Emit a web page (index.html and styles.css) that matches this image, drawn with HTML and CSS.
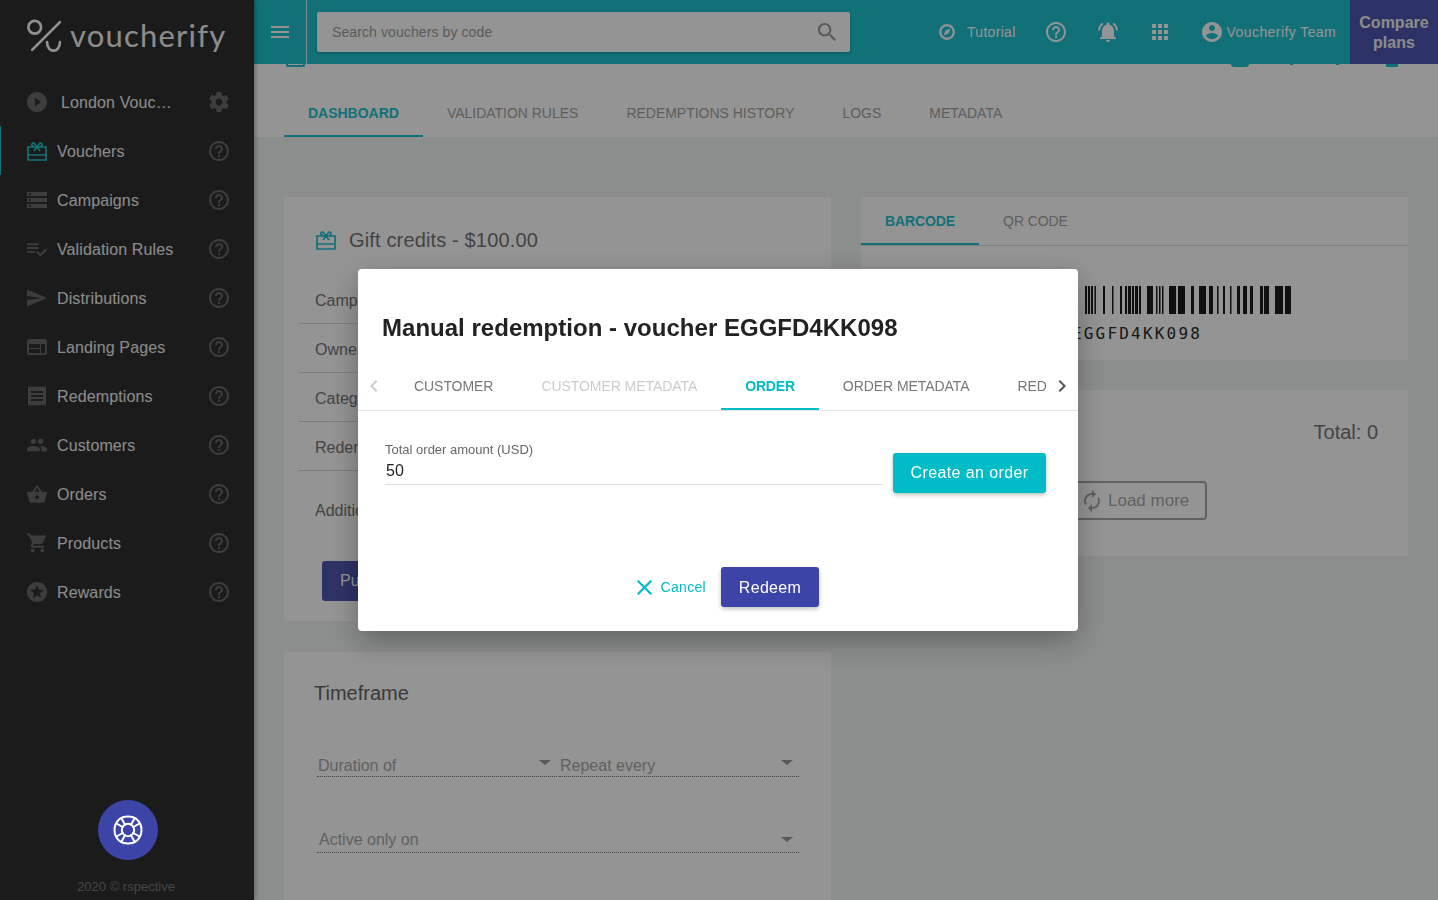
FILE: index.html
```html
<!DOCTYPE html>
<html lang="en">
<head>
    <meta charset="UTF-8">
    <meta name="viewport" content="width=device-width, initial-scale=1.0">
    <title>Voucherify - Manual redemption</title>
    <link rel="stylesheet" href="styles.css">
</head>
<body>
    <!-- icon sprite -->
    <svg class="sprite" xmlns="http://www.w3.org/2000/svg">
        <symbol id="i-help" viewBox="2 2 20 20"><path d="M11 18h2v-2h-2v2zm1-16C6.48 2 2 6.48 2 12s4.48 10 10 10 10-4.48 10-10S17.52 2 12 2zm0 18c-4.41 0-8-3.59-8-8s3.59-8 8-8 8 3.59 8 8-3.59 8-8 8zm0-14c-2.21 0-4 1.79-4 4h2c0-1.1.9-2 2-2s2 .9 2 2c0 2-3 1.75-3 5h2c0-2.25 3-2.5 3-5 0-2.21-1.79-4-4-4z"/></symbol>
        <symbol id="i-play" viewBox="2 2 20 20"><path d="M12 2C6.48 2 2 6.48 2 12s4.48 10 10 10 10-4.48 10-10S17.52 2 12 2zm-2 14.5v-9l6 4.5-6 4.5z"/></symbol>
        <symbol id="i-gear" viewBox="2 2 20 20"><path d="M19.43 12.98c.04-.32.07-.64.07-.98s-.03-.66-.07-.98l2.11-1.65c.19-.15.24-.42.12-.64l-2-3.46c-.12-.22-.39-.3-.61-.22l-2.49 1c-.52-.4-1.08-.73-1.69-.98l-.38-2.65C14.46 2.18 14.25 2 14 2h-4c-.25 0-.46.18-.49.42l-.38 2.65c-.61.25-1.17.59-1.69.98l-2.49-1c-.23-.09-.49 0-.61.22l-2 3.46c-.13.22-.07.49.12.64l2.11 1.65c-.04.32-.07.65-.07.98s.03.66.07.98l-2.11 1.65c-.19.15-.24.42-.12.64l2 3.46c.12.22.39.3.61.22l2.49-1c.52.4 1.08.73 1.69.98l.38 2.65c.03.24.24.42.49.42h4c.25 0 .46-.18.49-.42l.38-2.65c.61-.25 1.17-.59 1.69-.98l2.49 1c.23.09.49 0 .61-.22l2-3.46c.12-.22.07-.49-.12-.64l-2.11-1.65zM12 15.5c-1.93 0-3.5-1.57-3.5-3.5s1.57-3.5 3.5-3.5 3.5 1.57 3.5 3.5-1.57 3.5-3.5 3.5z"/></symbol>
        <symbol id="i-gift" viewBox="0 0 20 20"><path fill="none" stroke="currentColor" stroke-width="1.7" d="M1 6h18v13H1zM1 14h18M10 6 7.800 2.900a1.500 1.500 0 1 0-2.700 1.500L7 6M10 6l2.200-3.100a1.500 1.500 0 1 1 2.700 1.500L13 6M7 10l3-4 3 4"/></symbol>
        <symbol id="i-storage" viewBox="2 4 20 16"><path d="M2 20h20v-4H2v4zm2-3h2v2H4v-2zM2 4v4h20V4H2zm4 3H4V5h2v2zm-4 7h20v-4H2v4zm2-3h2v2H4v-2z"/></symbol>
        <symbol id="i-rules" viewBox="2 4 21 16"><path d="M14 10H2v2h12v-2zm0-4H2v2h12V6zM2 16h8v-2H2v2zm19.500-4.500L23 13l-6.990 7-4.510-4.500L13 14l3.010 3 5.490-5.500z"/></symbol>
        <symbol id="i-send" viewBox="2 3 21 18"><path d="M2.010 21L23 12 2.010 3 2 10l15 2-15 2z"/></symbol>
        <symbol id="i-web" viewBox="2 4 20 16"><path d="M20 4H4c-1.100 0-1.990.9-1.990 2L2 18c0 1.100.9 2 2 2h16c1.100 0 2-.9 2-2V6c0-1.100-.9-2-2-2zm-5 14H4v-4h11v4zm0-5H4V9h11v4zm5 5h-4V9h4v9z"/></symbol>
        <symbol id="i-receipt" viewBox="3 2 18 20"><path d="M18 17H6v-2h12v2zm0-4H6v-2h12v2zm0-4H6V7h12v2zM3 22l1.500-1.500L6 22l1.500-1.500L9 22l1.500-1.500L12 22l1.500-1.500L15 22l1.500-1.500L18 22l1.500-1.500L21 22V2l-1.500 1.500L18 2l-1.500 1.500L15 2l-1.500 1.500L12 2l-1.500 1.500L9 2 7.500 3.500 6 2 4.500 3.500 3 2v20z"/></symbol>
        <symbol id="i-people" viewBox="1 5 22 14"><path d="M16 11c1.660 0 2.990-1.340 2.990-3S17.660 5 16 5c-1.660 0-3 1.340-3 3s1.340 3 3 3zm-8 0c1.660 0 2.990-1.340 2.990-3S9.660 5 8 5C6.340 5 5 6.340 5 8s1.340 3 3 3zm0 2c-2.330 0-7 1.170-7 3.500V19h14v-2.500c0-2.330-4.670-3.500-7-3.500zm8 0c-.29 0-.62.02-.97.05 1.160.84 1.970 1.970 1.970 3.450V19h6v-2.500c0-2.330-4.670-3.500-7-3.500z"/></symbol>
        <symbol id="i-basket" viewBox="1 2 22 19"><path d="M17.210 9l-4.380-6.560c-.19-.28-.51-.42-.83-.42-.32 0-.64.14-.83.43L6.790 9H2c-.55 0-1 .45-1 1 0 .09.01.18.04.27l2.540 9.270c.23.84 1 1.460 1.920 1.460h13c.92 0 1.690-.62 1.930-1.460l2.540-9.270L23 10c0-.55-.45-1-1-1h-4.790zM9 9l3-4.400L15 9H9zm3 8c-1.100 0-2-.9-2-2s.9-2 2-2 2 .9 2 2-.9 2-2 2z"/></symbol>
        <symbol id="i-cart" viewBox="1 2 21 20"><path d="M7 18c-1.100 0-1.990.9-1.990 2S5.900 22 7 22s2-.9 2-2-.9-2-2-2zM1 2v2h2l3.600 7.590-1.350 2.450c-.16.28-.25.61-.25.96 0 1.100.9 2 2 2h12v-2H7.420c-.14 0-.25-.11-.25-.25l.03-.12.9-1.630h7.450c.75 0 1.410-.41 1.750-1.030l3.580-6.490c.08-.14.12-.31.12-.48 0-.55-.45-1-1-1H5.210l-.94-2H1zm16 16c-1.100 0-1.990.9-1.990 2s.89 2 1.990 2 2-.9 2-2-.9-2-2-2z"/></symbol>
        <symbol id="i-star" viewBox="2 2 20 20"><path d="M11.990 2C6.470 2 2 6.480 2 12s4.470 10 9.990 10C17.520 22 22 17.520 22 12S17.520 2 11.990 2zm4.240 16L12 15.450 7.770 18l1.120-4.810-3.730-3.230 4.920-.42L12 5l1.920 4.530 4.920.42-3.730 3.230L16.230 18z"/></symbol>
        <symbol id="i-menu" viewBox="3 6 18 12"><path d="M3 18h18v-2H3v2zm0-5h18v-2H3v2zm0-7v2h18V6H3z"/></symbol>
        <symbol id="i-search" viewBox="3 3 17.500 17.500"><path d="M15.500 14h-.79l-.28-.27C15.410 12.590 16 11.110 16 9.500 16 5.910 13.090 3 9.500 3S3 5.910 3 9.500 5.910 16 9.500 16c1.610 0 3.090-.59 4.230-1.570l.27.28v.79l5 4.990L20.490 19l-4.990-5zm-6 0C7.010 14 5 11.990 5 9.500S7.010 5 9.500 5 14 7.010 14 9.500 11.990 14 9.500 14z"/></symbol>
        <symbol id="i-compass" viewBox="0 0 16 16"><circle cx="8" cy="8" r="6.800" fill="none" stroke="currentColor" stroke-width="2.200"/><path d="M11.500 4.500 9.400 9.400 4.500 11.500 6.600 6.600z"/></symbol>
        <symbol id="i-bell" viewBox="2 2 20 20"><path d="M7.580 4.080L6.150 2.650C3.750 4.480 2.170 7.300 2.030 10.500h2c.15-2.650 1.510-4.970 3.550-6.420zm12.390 6.420h2c-.15-3.200-1.730-6.020-4.120-7.850l-1.420 1.430c2.020 1.450 3.390 3.770 3.540 6.420zM18 11c0-3.070-1.640-5.640-4.500-6.320V4c0-.83-.67-1.500-1.500-1.500s-1.500.67-1.500 1.500v.68C7.630 5.360 6 7.920 6 11v5l-2 2v1h16v-1l-2-2v-5zm-6 11c.14 0 .27-.01.4-.04.65-.14 1.180-.58 1.440-1.180.1-.24.15-.5.15-.78h-4c.01 1.100.9 2 2.010 2z"/></symbol>
        <symbol id="i-apps" viewBox="4 4 16 16"><path d="M4 8h4V4H4v4zm6 12h4v-4h-4v4zm-6 0h4v-4H4v4zm0-6h4v-4H4v4zm6 0h4v-4h-4v4zm6-10v4h4V4h-4zm-6 4h4V4h-4v4zm6 6h4v-4h-4v4zm0 6h4v-4h-4v4z"/></symbol>
        <symbol id="i-user" viewBox="2 2 20 20"><path d="M12 2C6.480 2 2 6.480 2 12s4.480 10 10 10 10-4.480 10-10S17.520 2 12 2zm0 3c1.660 0 3 1.340 3 3s-1.340 3-3 3-3-1.340-3-3 1.340-3 3-3zm0 14.200c-2.500 0-4.710-1.280-6-3.220.03-1.990 4-3.080 6-3.080 1.990 0 5.970 1.090 6 3.080-1.290 1.940-3.500 3.220-6 3.220z"/></symbol>
        <symbol id="i-left" viewBox="0 0 24 24"><path d="M15.410 7.410L14 6l-6 6 6 6 1.410-1.410L10.830 12z"/></symbol>
        <symbol id="i-right" viewBox="0 0 24 24"><path d="M10 6L8.590 7.410 13.170 12l-4.580 4.590L10 18l6-6z"/></symbol>
        <symbol id="i-close" viewBox="5 5 14 14"><path d="M19 6.410L17.590 5 12 10.590 6.410 5 5 6.410 10.590 12 5 17.590 6.410 19 12 13.410 17.590 19 19 17.590 13.410 12z"/></symbol>
        <symbol id="i-renew" viewBox="4 1 16 22"><path d="M12 6v3l4-4-4-4v3c-4.420 0-8 3.580-8 8 0 1.570.46 3.030 1.240 4.260L6.700 14.800c-.45-.83-.7-1.790-.7-2.800 0-3.310 2.690-6 6-6zm6.760 1.740L17.300 9.200c.44.84.7 1.790.7 2.800 0 3.310-2.690 6-6 6v-3l-4 4 4 4v-3c4.420 0 8-3.580 8-8 0-1.570-.46-3.030-1.240-4.260z"/></symbol>
    </svg>

    <aside class="sidebar">
        <div class="logo">
            <svg class="logo-mark" viewBox="0 0 36 36" stroke="currentColor" stroke-width="2.600" stroke-linecap="round">
                <circle cx="8.500" cy="9" r="6.200"/>
                <path d="M33 4 6 31"/>
                <path d="M20.500 23.500c0 11 12.500 11 12.500 0"/>
            </svg>
            <span class="logo-text">voucherify</span>
        </div>
        <nav class="nav">
            <a class="nav-item project"><svg class="nav-icon"><use href="#i-play"/></svg><span class="nav-label">London Vouc…</span><svg class="nav-help"><use href="#i-gear"/></svg></a>
            <a class="nav-item active"><svg class="nav-icon"><use href="#i-gift"/></svg><span class="nav-label">Vouchers</span><svg class="nav-help"><use href="#i-help"/></svg></a>
            <a class="nav-item"><svg class="nav-icon"><use href="#i-storage"/></svg><span class="nav-label">Campaigns</span><svg class="nav-help"><use href="#i-help"/></svg></a>
            <a class="nav-item"><svg class="nav-icon"><use href="#i-rules"/></svg><span class="nav-label">Validation Rules</span><svg class="nav-help"><use href="#i-help"/></svg></a>
            <a class="nav-item"><svg class="nav-icon"><use href="#i-send"/></svg><span class="nav-label">Distributions</span><svg class="nav-help"><use href="#i-help"/></svg></a>
            <a class="nav-item"><svg class="nav-icon"><use href="#i-web"/></svg><span class="nav-label">Landing Pages</span><svg class="nav-help"><use href="#i-help"/></svg></a>
            <a class="nav-item"><svg class="nav-icon"><use href="#i-receipt"/></svg><span class="nav-label">Redemptions</span><svg class="nav-help"><use href="#i-help"/></svg></a>
            <a class="nav-item"><svg class="nav-icon"><use href="#i-people"/></svg><span class="nav-label">Customers</span><svg class="nav-help"><use href="#i-help"/></svg></a>
            <a class="nav-item"><svg class="nav-icon"><use href="#i-basket"/></svg><span class="nav-label">Orders</span><svg class="nav-help"><use href="#i-help"/></svg></a>
            <a class="nav-item"><svg class="nav-icon"><use href="#i-cart"/></svg><span class="nav-label">Products</span><svg class="nav-help"><use href="#i-help"/></svg></a>
            <a class="nav-item"><svg class="nav-icon"><use href="#i-star"/></svg><span class="nav-label">Rewards</span><svg class="nav-help"><use href="#i-help"/></svg></a>
        </nav>
        <button class="support">
            <svg viewBox="0 0 30 30" stroke="currentColor" stroke-width="2">
                <path d="M15 1.500c4 0 6.500.8 9 3 2.700 2.500 4.500 5.500 4.500 10.500s-1.800 8-4.500 10.500c-2.500 2.200-5 3-9 3s-6.500-.8-9-3C3.300 23 1.500 20 1.500 15S3.300 7 6 4.500c2.500-2.200 5-3 9-3z"/>
                <circle cx="15" cy="15" r="6.200"/>
                <path d="M3.500 8.500l7 4M26.500 8.500l-7 4M3.500 21.500l7-4M26.500 21.500l-7-4M8.500 3.500l4 7M21.500 3.500l-4 7M8.500 26.500l4-7M21.500 26.500l-4-7"/>
            </svg>
        </button>
        <div class="copyright">2020 © rspective</div>
    </aside>

    <main class="main">
        <header class="topbar">
            <div class="menu-cell"><svg class="menu-icon"><use href="#i-menu"/></svg></div>
            <div class="search">
                <input type="text" class="search-input" placeholder="Search vouchers by code">
                <svg class="search-icon"><use href="#i-search"/></svg>
            </div>
            <div class="top-links">
                <a class="top-link tutorial"><svg class="icon-16"><use href="#i-compass"/></svg>Tutorial</a>
                <svg class="top-icon help"><use href="#i-help"/></svg>
                <svg class="top-icon bell"><use href="#i-bell"/></svg>
                <svg class="top-icon apps"><use href="#i-apps"/></svg>
                <a class="top-link team"><svg class="top-icon"><use href="#i-user"/></svg>Voucherify Team</a>
            </div>
            <a class="compare">Compare plans</a>
        </header>

        <!-- bottom of the page heading, scrolled under the top bar -->
        <div class="peek">
            <span class="peek-box"></span>
            <span class="peek-dot"></span>
            <span class="peek-tick tick-a"></span>
            <span class="peek-tick tick-b"></span>
            <span class="peek-end"></span>
        </div>

        <div class="page-tabs">
            <a class="page-tab current">DASHBOARD</a>
            <a class="page-tab">VALIDATION RULES</a>
            <a class="page-tab">REDEMPTIONS HISTORY</a>
            <a class="page-tab">LOGS</a>
            <a class="page-tab">METADATA</a>
        </div>

        <div class="content">
            <div class="column">
                <section class="card details">
                    <h2 class="card-title"><svg class="title-icon"><use href="#i-gift"/></svg>Gift credits - $100.00</h2>
                    <div class="detail-row">Campaign</div>
                    <div class="detail-row">Owner</div>
                    <div class="detail-row">Category</div>
                    <div class="detail-row">Redemp.</div>
                    <div class="detail-extra">Additional info</div>
                    <button class="publish">Publish</button>
                </section>
                <section class="card timeframe">
                    <h2 class="timeframe-title">Timeframe</h2>
                    <div class="select-row">
                        <div class="select">Duration of<span class="caret"></span></div>
                        <div class="select">Repeat every<span class="caret"></span></div>
                    </div>
                    <div class="select-row second">
                        <div class="select">Active only on<span class="caret"></span></div>
                    </div>
                </section>
            </div>
            <div class="column">
                <section class="card code-card">
                    <div class="code-tabs">
                        <a class="code-tab current">BARCODE</a>
                        <a class="code-tab">QR CODE</a>
                    </div>
                    <div class="barcode">
                        <svg class="bars" viewBox="978 0 313 28">
                            <rect x="1040" width="4" height="28"/><rect x="1050" width="2" height="28"/><rect x="1058" width="3" height="28"/><rect x="1066" width="5" height="28"/>
                            <rect x="1076" width="2" height="28"/><rect x="1085" width="2" height="28"/><rect x="1088" width="2" height="28"/><rect x="1091" width="2" height="28"/><rect x="1094.500" width="1.500" height="28"/>
                            <rect x="1103" width="2" height="28"/><rect x="1112" width="1.500" height="28"/><rect x="1120" width="2" height="28"/><rect x="1125" width="2" height="28"/>
                            <rect x="1128" width="3" height="28"/><rect x="1132" width="2" height="28"/><rect x="1135" width="3" height="28"/><rect x="1139" width="2" height="28"/>
                            <rect x="1147" width="6" height="28"/><rect x="1156" width="1.500" height="28"/>
                            <rect x="1159" width="1.500" height="28"/><rect x="1162" width="1.500" height="28"/><rect x="1169" width="7" height="28"/><rect x="1178" width="7" height="28"/>
                            <rect x="1191" width="3" height="28"/><rect x="1199" width="7" height="28"/><rect x="1209" width="4" height="28"/><rect x="1217" width="1.500" height="28"/>
                            <rect x="1223" width="2" height="28"/><rect x="1230" width="1.500" height="28"/><rect x="1237" width="3" height="28"/><rect x="1243" width="4" height="28"/>
                            <rect x="1250" width="3" height="28"/><rect x="1260" width="3" height="28"/><rect x="1264" width="5" height="28"/><rect x="1275" width="8" height="28"/><rect x="1285" width="6" height="28"/>
                        </svg>
                        <div class="code-text">EGGFD4KK098</div>
                    </div>
                </section>
                <section class="card history">
                    <div class="total">Total: 0</div>
                    <button class="load-more"><svg class="renew"><use href="#i-renew"/></svg>Load more</button>
                </section>
            </div>
        </div>
    </main>

    <div class="overlay">
        <div class="modal">
            <h1 class="modal-title">Manual redemption - voucher EGGFD4KK098</h1>
            <div class="modal-tabs">
                <svg class="tab-arrow faded"><use href="#i-left"/></svg>
                <div class="tab-scroll">
                    <a class="modal-tab">CUSTOMER</a>
                    <a class="modal-tab disabled">CUSTOMER METADATA</a>
                    <a class="modal-tab current">ORDER</a>
                    <a class="modal-tab">ORDER METADATA</a>
                    <a class="modal-tab last">RED</a>
                </div>
                <svg class="tab-arrow next"><use href="#i-right"/></svg>
            </div>
            <div class="order-form">
                <label class="field">
                    <span class="field-label">Total order amount (USD)</span>
                    <input type="text" class="field-input" value="50">
                </label>
                <button class="btn-order">Create an order</button>
            </div>
            <div class="modal-actions">
                <a class="cancel"><svg class="cancel-icon"><use href="#i-close"/></svg>Cancel</a>
                <button class="btn-redeem">Redeem</button>
            </div>
        </div>
    </div>
</body>
</html>
```

FILE: styles.css
```css
* {
    box-sizing: border-box;
}
html, body {
    height: 100%;
}
body {
    display: flex;
    margin: 0;
    overflow: hidden;
    font-family: "Liberation Sans", Arial, sans-serif;
    background-color: #f0f5f3;
    color: #757575;
}
svg {
    fill: currentColor;
}
button {
    font-family: inherit;
    border: none;
    cursor: pointer;
}
.sprite {
    display: none;
}

/* sidebar */
.sidebar {
    position: relative;
    display: flex;
    flex-direction: column;
    flex: 0 0 254px;
    height: 900px;
    background: #303030;
    box-shadow: 1px 0 5px rgba(0,0,0,0.35);
}
.logo {
    display: flex;
    align-items: center;
    height: 77px;
    padding: 0 0 5px 26px;
    color: #fafafa;
}
.logo-mark {
    width: 37px;
    height: 37px;
    margin-right: 7px;
    fill: none;
}
.logo-text {
    margin-top: -2px;
    font-family: Lato, sans-serif;
    font-size: 31px;
    letter-spacing: 1.2px;
    color: #f2f2f2;
}
.nav-item {
    display: flex;
    align-items: center;
    height: 49px;
    padding: 0 25px 0 27px;
    font-size: 16px;
    letter-spacing: 0.12px;
    color: #f0f0f0;
}
.nav-item.active {
    box-shadow: inset 1px 0 0 #1fc3cf;
}
.nav-icon {
    flex: 0 0 20px;
    width: 20px;
    height: 20px;
    margin-right: 10px;
    color: #6a6a6a;
}
.nav-item.active .nav-icon {
    color: #1fc3cf;
}
.nav-label {
    flex: 1;
    padding-top: 2px;
}
.nav-help {
    width: 20px;
    height: 20px;
    color: #6a6a6a;
}
.project .nav-label {
    padding-left: 4px;
}
.support {
    position: relative;
    z-index: 30;
    display: flex;
    align-items: center;
    justify-content: center;
    width: 60px;
    height: 60px;
    margin: auto 0 0 98px;
    padding: 0;
    border-radius: 50%;
    background: #3c45a7;
    color: #fff;
}
.support svg {
    width: 30px;
    height: 30px;
    fill: none;
}
.copyright {
    margin: 19px 0 6px;
    padding-right: 2px;
    text-align: center;
    font-size: 13px;
    color: #7b7b7b;
}

/* main column */
.main {
    display: flex;
    flex-direction: column;
    flex: 1;
    min-width: 0;
    height: 900px;
    overflow: hidden;
}
.topbar {
    display: flex;
    align-items: center;
    flex: 0 0 64px;
    height: 64px;
    background: #1fc3cf;
    color: #fff;
}
.menu-cell {
    display: flex;
    align-items: center;
    justify-content: center;
    width: 53px;
    height: 64px;
    padding-right: 1px;
    border-right: 1px solid #d4f4f7;
}
.menu-icon {
    width: 18px;
    height: 12px;
}
.search {
    position: relative;
    width: 533px;
    height: 40px;
    margin-left: 10px;
    background: #fff;
    border-radius: 2px;
    box-shadow: 0 1px 3px rgba(0,0,0,0.3);
}
.search-input {
    width: 100%;
    height: 100%;
    padding: 0 50px 0 15px;
    border: none;
    background: transparent;
    font-family: inherit;
    font-size: 14px;
    letter-spacing: 0.1px;
}
.search-input::placeholder {
    color: #9d9d9d;
    opacity: 1;
}
.search-icon {
    position: absolute;
    top: 11px;
    right: 14px;
    width: 18px;
    height: 18px;
    color: #999;
}
.top-links {
    display: flex;
    align-items: center;
    flex: 1;
    font-size: 14px;
    letter-spacing: 0.3px;
}
.top-link {
    display: flex;
    align-items: center;
}
.icon-16 {
    width: 16px;
    height: 16px;
    margin-right: 12px;
}
.top-icon {
    width: 20px;
    height: 20px;
}
.tutorial {
    margin-left: 89px;
}
.help {
    margin-left: 30px;
}
.bell {
    margin-left: 32px;
}
.apps {
    width: 16px;
    height: 16px;
    margin-left: 34px;
}
.team {
    margin-left: 34px;
    letter-spacing: 0.42px;
}
.team .top-icon {
    margin-right: 5px;
}
.compare {
    display: flex;
    align-items: center;
    flex: 0 0 88px;
    height: 64px;
    padding: 2px 6px 0;
    background: #4f56b0;
    text-align: center;
    font-size: 16px;
    font-weight: bold;
    line-height: 20px;
    color: #f0f0f0;
}

/* page heading remains */
.peek {
    display: flex;
    flex: 0 0 3px;
    height: 3px;
    overflow: hidden;
    padding-left: 32px;
    background: #fff;
}
.peek-box {
    width: 19px;
    height: 3px;
    border: 2px solid #1fc3cf;
    border-top: none;
    border-radius: 0 0 2px 2px;
}
.peek-dot {
    width: 18px;
    height: 3px;
    margin-left: 926px;
    border-radius: 0 0 9px 9px;
    background: #1fc3cf;
}
.peek-tick {
    width: 3px;
    height: 1px;
    background: #1fc3cf;
}
.tick-a {
    margin-left: 41px;
}
.tick-b {
    margin-left: 43px;
}
.peek-end {
    width: 12px;
    height: 3px;
    margin-left: 47px;
    background: #1fc3cf;
}

.page-tabs {
    display: flex;
    flex: 0 0 70px;
    padding-left: 30px;
    background: #fff;
}
.page-tab {
    display: flex;
    align-items: center;
    padding: 22px 24px 0;
    font-size: 14px;
    letter-spacing: -0.015px;
    color: #a3a3a3;
}
.page-tab.current {
    padding-top: 24px;
    border-bottom: 2px solid #1fc3cf;
    font-weight: bold;
    color: #1fc3cf;
}

/* cards */
.content {
    display: grid;
    grid-template-columns: 1fr 1fr;
    gap: 30px;
    flex: 1;
    padding: 60px 30px 0;
}
.column {
    display: flex;
    flex-direction: column;
    gap: 30px;
}
.card {
    background: #fff;
}
.details {
    height: 424px;
    padding-top: 28px;
    margin-bottom: 1px;
}
.card-title {
    display: flex;
    align-items: center;
    height: 30px;
    margin: 0 0 20px 32px;
    font-size: 20px;
    font-weight: normal;
    letter-spacing: 0.15px;
}
.title-icon {
    width: 20px;
    height: 20px;
    margin-right: 13px;
    color: #1fc3cf;
}
.detail-row {
    display: flex;
    align-items: center;
    height: 49px;
    margin: 0 15px;
    padding: 3px 0 0 16px;
    border-bottom: 1px solid #d8d8d8;
    font-size: 16px;
}
.detail-extra {
    display: flex;
    align-items: center;
    height: 78px;
    padding: 2px 0 0 31px;
    font-size: 16px;
}
.publish {
    display: block;
    width: 120px;
    height: 40px;
    margin: 12px 0 0 38px;
    border-radius: 3px;
    background: #4f56b0;
    text-align: left;
    padding-left: 18px;
    font-size: 16px;
    color: #fff;
}
.timeframe {
    flex: 1;
    padding: 28px 32px 0 33px;
}
.timeframe-title {
    margin: 0 0 0 -3px;
    height: 26px;
    line-height: 26px;
    font-size: 20px;
    font-weight: normal;
    color: #646464;
}
.select-row {
    display: flex;
    gap: 2px;
    margin-top: 43px;
}
.select-row.second {
    margin-top: 48px;
}
.select {
    position: relative;
    flex: 1;
    height: 28px;
    padding: 8px 0 0 1px;
    border-bottom: 1px dotted #777;
    font-size: 16px;
    color: #a8a8a8;
}
.caret {
    position: absolute;
    top: 11px;
    right: 6px;
    border-top: 5px solid #999;
    border-left: 6px solid transparent;
    border-right: 6px solid transparent;
}
.second .select {
    padding: 6px 0 0 2px;
}
.second .caret {
    top: 12px;
}
.code-card {
    height: 163px;
}
.code-tabs {
    display: flex;
    height: 49px;
    border-bottom: 1px solid #e0e0e0;
}
.code-tab {
    display: flex;
    align-items: center;
    height: 48px;
    padding: 0 24px;
    font-size: 14px;
    letter-spacing: -0.1px;
    color: #a3a3a3;
}
.code-tab.current {
    padding-top: 2px;
    border-bottom: 2px solid #1fc3cf;
    font-weight: bold;
    color: #1fc3cf;
}
.barcode {
    padding-top: 40px;
    text-align: center;
}
.bars {
    display: block;
    width: 313px;
    height: 28px;
    margin: 0 auto;
    fill: #1c1c1c;
}
.code-text {
    margin-top: 10px;
    padding-left: 5px;
    font-family: "DejaVu Sans Mono", monospace;
    font-size: 16px;
    letter-spacing: 2.2px;
    color: #2a2a2a;
}
.history {
    position: relative;
    height: 166px;
    padding: 29px 30px 0;
}
.total {
    height: 26px;
    line-height: 26px;
    text-align: right;
    font-size: 20px;
}
.load-more {
    display: flex;
    align-items: center;
    width: 190px;
    height: 39px;
    margin: 36px 0 0 126px;
    padding-left: 65px;
    border: 2px solid #a8a8a8;
    border-radius: 4px;
    background: transparent;
    font-size: 17px;
    color: #a8a8a8;
}
.renew {
    width: 16px;
    height: 22px;
    margin-right: 8px;
}

/* dialog */
.overlay {
    position: fixed;
    z-index: 20;
    inset: 0;
    display: flex;
    align-items: center;
    justify-content: center;
    padding-right: 2px;
    background: rgba(0,0,0,0.42);
}
.modal {
    width: 720px;
    height: 362px;
    border-radius: 4px;
    background: #fff;
    box-shadow: 0 10px 30px rgba(0,0,0,0.3);
    color: #222;
}
.modal-title {
    height: 93px;
    margin: 0;
    padding: 43px 0 0 24px;
    font-size: 24px;
    line-height: 32px;
    font-weight: bold;
    letter-spacing: 0.02px;
}
.modal-tabs {
    display: flex;
    align-items: flex-start;
    height: 49px;
    border-bottom: 1px solid #e4e4e4;
}
.tab-arrow {
    flex: 0 0 32px;
    width: 32px;
    height: 24px;
    margin-top: 12px;
    color: #555;
}
.tab-arrow.faded {
    color: #ccc;
}
.tab-arrow.next {
    flex: 0 0 24px;
    width: 24px;
    margin-right: 4px;
}
.tab-scroll {
    display: flex;
    flex: 1;
    min-width: 0;
}
.modal-tab {
    display: flex;
    flex: none;
    align-items: center;
    height: 48px;
    padding: 0 24px;
    font-size: 14px;
    letter-spacing: -0.06px;
    color: #777;
}
.modal-tab.disabled {
    color: #ccc;
}
.modal-tab.current {
    padding-top: 2px;
    border-bottom: 2px solid #00bcc6;
    font-weight: bold;
    letter-spacing: -0.2px;
    color: #00bcc6;
}
.modal-tab.last {
    padding-right: 0;
}
.order-form {
    display: flex;
    align-items: flex-start;
    padding: 30px 32px 0 27px;
    height: 156px;
}
.field {
    display: block;
    flex: 1;
    margin-right: 11px;
}
.field-label {
    display: block;
    height: 18px;
    padding-top: 1px;
    font-size: 13px;
    color: #666;
}
.field-input {
    display: block;
    width: 100%;
    height: 26px;
    padding: 0 0 1px 1px;
    border: none;
    border-bottom: 1px solid #ddd;
    font-family: inherit;
    font-size: 16px;
    color: #222;
}
.btn-order {
    width: 153px;
    height: 40px;
    margin-top: 12px;
    padding: 0;
    border-radius: 3px;
    background: #00bcc6;
    box-shadow: 0 2px 4px rgba(0,0,0,0.25);
    font-size: 16px;
    letter-spacing: 0.4px;
    color: #fff;
}
.modal-actions {
    display: flex;
    align-items: center;
    justify-content: flex-end;
    padding-right: 259px;
}
.cancel {
    display: flex;
    align-items: center;
    margin-right: 15px;
    font-size: 14px;
    letter-spacing: 0.3px;
    color: #00bcc6;
}
.cancel-icon {
    width: 15px;
    height: 15px;
    margin-right: 9px;
}
.btn-redeem {
    width: 98px;
    height: 40px;
    padding: 1px 0 0;
    border-radius: 3px;
    background: #3c45a7;
    box-shadow: 0 2px 4px rgba(0,0,0,0.25);
    font-size: 16px;
    letter-spacing: 0.3px;
    color: #fff;
}
```
